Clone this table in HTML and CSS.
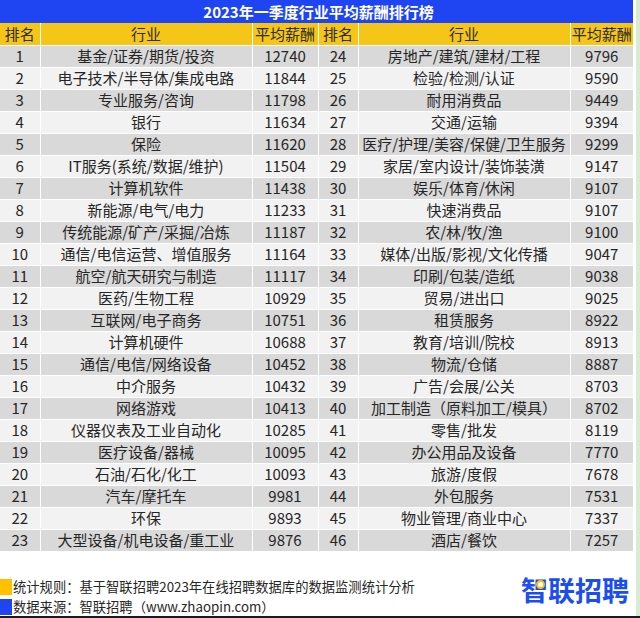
FILE: index.html
```html
<!DOCTYPE html>
<html lang="zh-CN">
<head>
<meta charset="utf-8">
<title>2023年一季度行业平均薪酬排行榜</title>
<link rel="stylesheet" href="styles.css">
</head>
<body>
<div class="page">
  <div class="sheet">
    <div class="title">2023年一季度行业平均薪酬排行榜</div>
    <table class="rank">
      <colgroup>
        <col class="c-rank"><col class="c-ind"><col class="c-sal">
        <col class="c-rank"><col class="c-ind"><col class="c-sal2">
      </colgroup>
      <thead>
        <tr><th>排名</th><th>行业</th><th>平均薪酬</th><th>排名</th><th>行业</th><th>平均薪酬</th></tr>
      </thead>
      <tbody>
        <tr><td>1</td><td>基金/证券/期货/投资</td><td>12740</td><td>24</td><td>房地产/建筑/建材/工程</td><td>9796</td></tr>
        <tr><td>2</td><td>电子技术/半导体/集成电路</td><td>11844</td><td>25</td><td>检验/检测/认证</td><td>9590</td></tr>
        <tr><td>3</td><td>专业服务/咨询</td><td>11798</td><td>26</td><td>耐用消费品</td><td>9449</td></tr>
        <tr><td>4</td><td>银行</td><td>11634</td><td>27</td><td>交通/运输</td><td>9394</td></tr>
        <tr><td>5</td><td>保险</td><td>11620</td><td>28</td><td>医疗/护理/美容/保健/卫生服务</td><td>9299</td></tr>
        <tr><td>6</td><td>IT服务(系统/数据/维护)</td><td>11504</td><td>29</td><td>家居/室内设计/装饰装潢</td><td>9147</td></tr>
        <tr><td>7</td><td>计算机软件</td><td>11438</td><td>30</td><td>娱乐/体育/休闲</td><td>9107</td></tr>
        <tr><td>8</td><td>新能源/电气/电力</td><td>11233</td><td>31</td><td>快速消费品</td><td>9107</td></tr>
        <tr><td>9</td><td>传统能源/矿产/采掘/冶炼</td><td>11187</td><td>32</td><td>农/林/牧/渔</td><td>9100</td></tr>
        <tr><td>10</td><td>通信/电信运营、增值服务</td><td>11164</td><td>33</td><td>媒体/出版/影视/文化传播</td><td>9047</td></tr>
        <tr><td>11</td><td>航空/航天研究与制造</td><td>11117</td><td>34</td><td>印刷/包装/造纸</td><td>9038</td></tr>
        <tr><td>12</td><td>医药/生物工程</td><td>10929</td><td>35</td><td>贸易/进出口</td><td>9025</td></tr>
        <tr><td>13</td><td>互联网/电子商务</td><td>10751</td><td>36</td><td>租赁服务</td><td>8922</td></tr>
        <tr><td>14</td><td>计算机硬件</td><td>10688</td><td>37</td><td>教育/培训/院校</td><td>8913</td></tr>
        <tr><td>15</td><td>通信/电信/网络设备</td><td>10452</td><td>38</td><td>物流/仓储</td><td>8887</td></tr>
        <tr><td>16</td><td>中介服务</td><td>10432</td><td>39</td><td>广告/会展/公关</td><td>8703</td></tr>
        <tr><td>17</td><td>网络游戏</td><td>10413</td><td>40</td><td>加工制造（原料加工/模具）</td><td>8702</td></tr>
        <tr><td>18</td><td>仪器仪表及工业自动化</td><td>10285</td><td>41</td><td>零售/批发</td><td>8119</td></tr>
        <tr><td>19</td><td>医疗设备/器械</td><td>10095</td><td>42</td><td>办公用品及设备</td><td>7770</td></tr>
        <tr><td>20</td><td>石油/石化/化工</td><td>10093</td><td>43</td><td>旅游/度假</td><td>7678</td></tr>
        <tr><td>21</td><td>汽车/摩托车</td><td>9981</td><td>44</td><td>外包服务</td><td>7531</td></tr>
        <tr><td>22</td><td>环保</td><td>9893</td><td>45</td><td>物业管理/商业中心</td><td>7337</td></tr>
        <tr><td>23</td><td>大型设备/机电设备/重工业</td><td>9876</td><td>46</td><td>酒店/餐饮</td><td>7257</td></tr>
      </tbody>
    </table>
    <div class="footer">
      <div class="notes">
        <div class="note"><span class="swatch yellow"></span><span>统计规则：基于智联招聘2023年在线招聘数据库的数据监测统计分析</span></div>
        <div class="note"><span class="swatch blue"></span><span>数据来源：智联招聘（www.zhaopin.com）</span></div>
      </div>
      <div class="logo"><span class="logo-text">智联招聘</span><span class="logo-dot"></span></div>
    </div>
  </div>
  <div class="edge"></div>
</div>
</body>
</html>
```

FILE: styles.css
```css
* { box-sizing: border-box; }
html, body {
  margin: 0;
  padding: 0;
  background: #ffffff;
}
body {
  font-family: "Noto Sans CJK SC", "Noto Sans", sans-serif;
  color: #262626;
}
.page {
  width: 640px;
  height: 618px;
  display: flex;
  border-bottom: 2px solid #1a1a1a;
  overflow: hidden;
}
.sheet {
  width: 633px;
  display: flex;
  flex-direction: column;
}
.edge {
  width: 4px;
  margin-left: 3px;
  background: #d7ecd2;
}
.title {
  height: 23px;
  background: #1f45f2;
  color: #ffffff;
  font-weight: bold;
  font-size: 15px;
  line-height: 23px;
  text-align: center;
  padding-left: 4px;
}
.rank {
  width: 633px;
  border-collapse: collapse;
  table-layout: fixed;
  font-size: 15px;
}
.c-rank { width: 40px; }
.c-ind { width: 212px; }
.c-sal { width: 66px; }
.c-sal2 { width: 63px; }
.rank th, .rank td {
  height: 22px;
  padding: 0;
  text-align: center;
  line-height: 20px;
  border: 1px solid #ffffff;
  white-space: nowrap;
  overflow: hidden;
}
.rank thead tr:first-child th { border-top: none; }
.rank tr > :first-child { border-left: none; }
.rank tr > :last-child { border-right: none; }
.rank th {
  background: #f5c518;
  font-weight: normal;
  color: #2b2b2b;
  font-size: 15px;
}
.rank tbody tr:nth-child(odd) td { background: #d9d9d9; }
.rank tbody tr:nth-child(even) td { background: #f2f2f2; }
.footer {
  flex: 1;
  display: flex;
  justify-content: space-between;
  align-items: flex-end;
}
.notes {
  display: flex;
  flex-direction: column;
  gap: 4px;
  padding-bottom: 1px;
}
.note {
  display: flex;
  align-items: center;
  gap: 1px;
  font-size: 13.3px;
  line-height: 16px;
  color: #262626;
}
.swatch {
  width: 12px;
  height: 16px;
  display: inline-block;
}
.swatch.yellow { background: #ffc000; }
.swatch.blue { background: #1f45f2; }
.logo {
  position: relative;
  margin-right: 4px;
  margin-bottom: 10px;
}
.logo-text {
  font-size: 27px;
  font-weight: bold;
  color: #1a4ef0;
  line-height: 32px;
}
.logo-dot {
  position: absolute;
  left: 15px;
  top: 6px;
  width: 9px;
  height: 9px;
  border: 2px solid #ffc000;
  border-radius: 50%;
  background: #ffffff;
}
```
